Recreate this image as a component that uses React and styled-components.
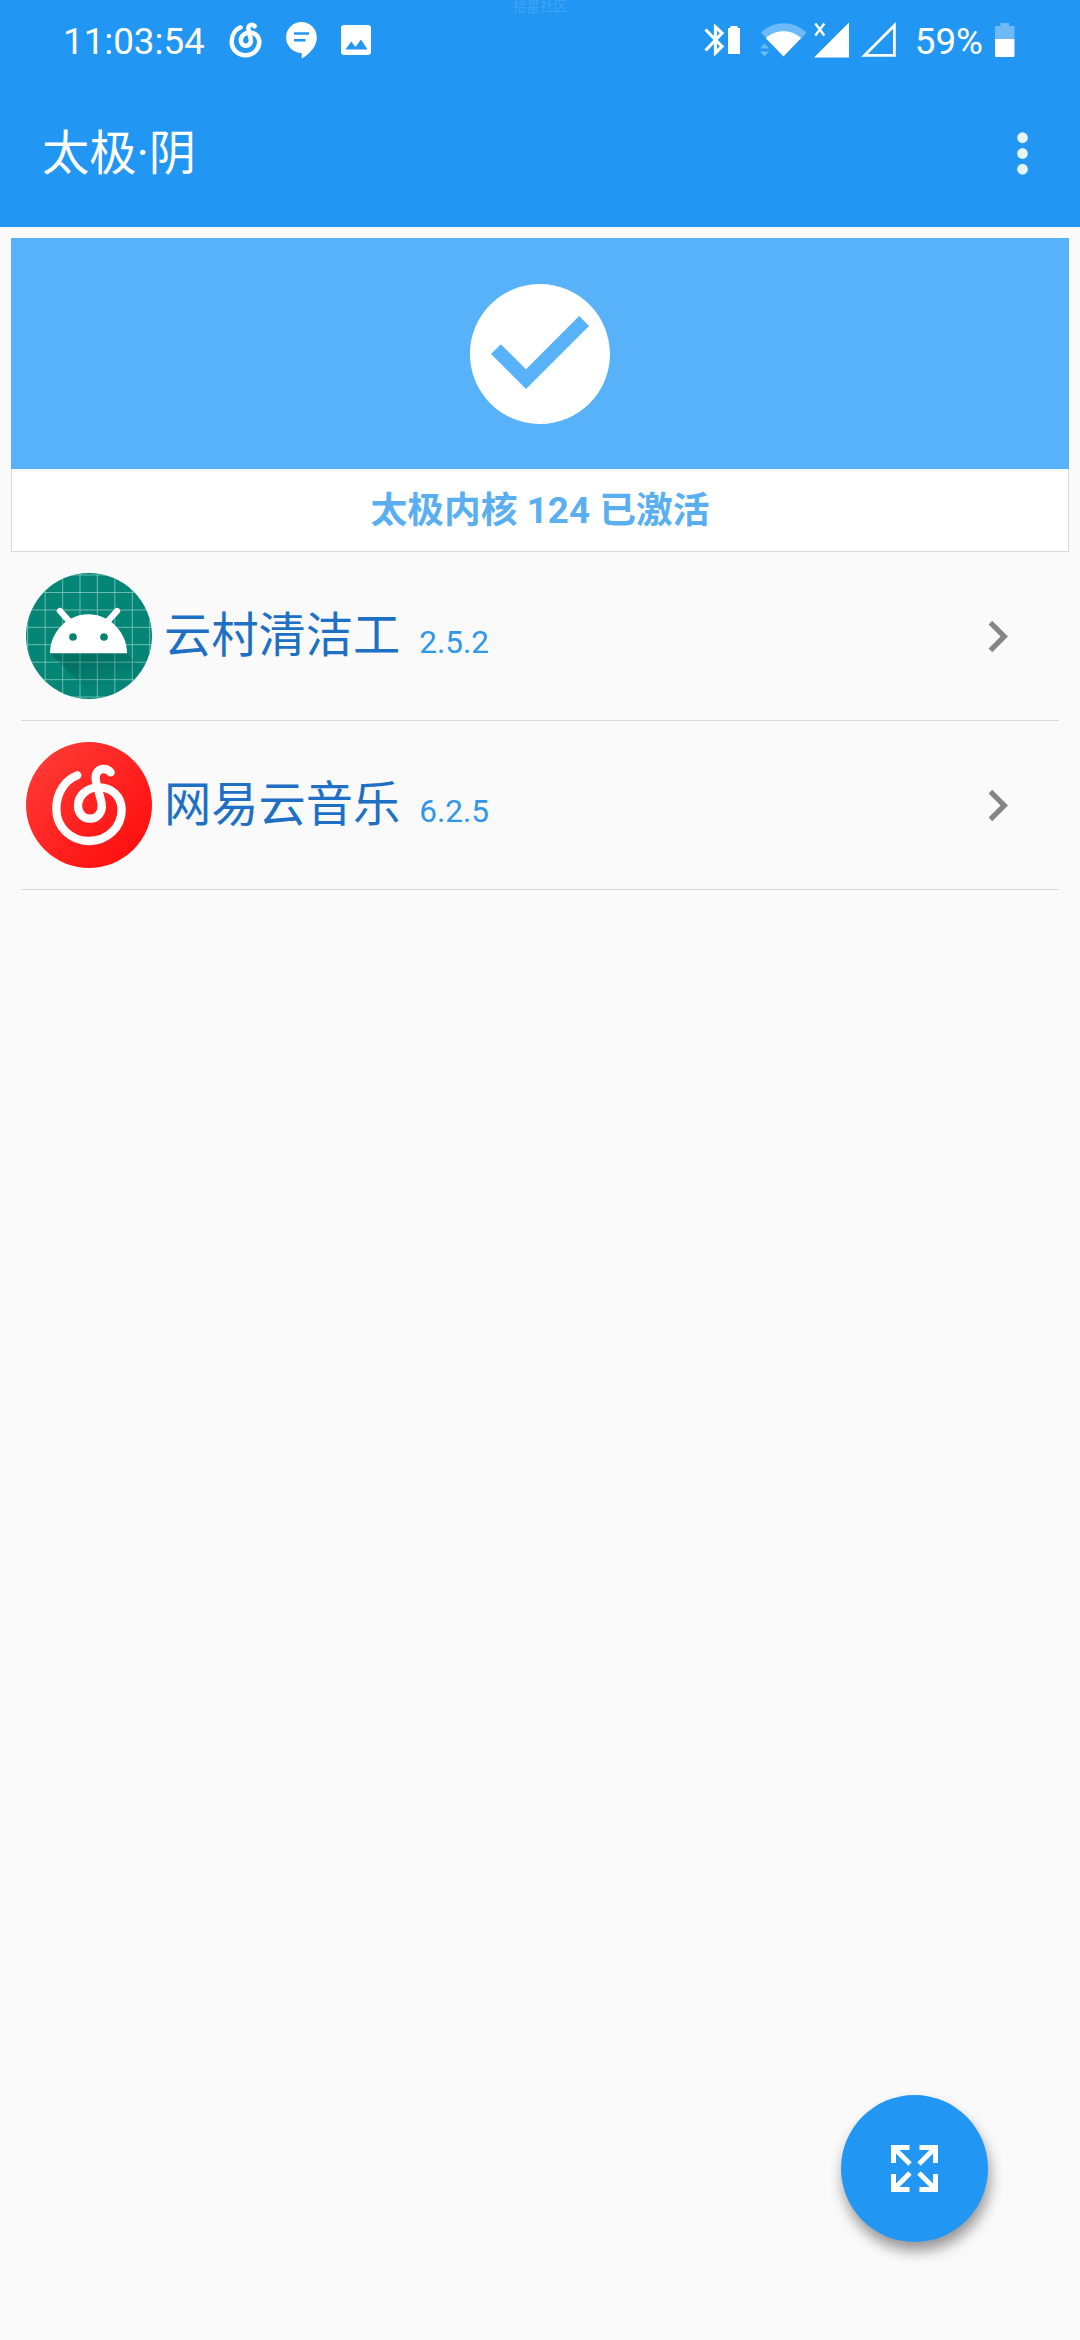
import * as React from "react";
import styled, { createGlobalStyle } from "styled-components";

const appsList = [
  { id: "cleaner", name: "云村清洁工", version: "2.5.2", Icon: IconAndroid },
  { id: "music", name: "网易云音乐", version: "6.2.5", Icon: IconMusic },
];

function App() {
  return (
    <Screen>
      <GlobalStyle />
      <AppBar>
        <Watermark>拾星社区</Watermark>
        <StatusBar>
          <StatusGroup>
            <StatusText>11:03:54</StatusText>
            <MusicStatus viewBox="157 165 220 240">
              <MusicGlyph strokeWidth="32" />
            </MusicStatus>
            <ChatStatus />
            <PictureStatus />
          </StatusGroup>
          <StatusGroup>
            <BluetoothStatus />
            <WifiStatus />
            <SignalStatus />
            <SignalEmptyStatus />
            <StatusText>59%</StatusText>
            <BatteryStatus />
          </StatusGroup>
        </StatusBar>
        <Toolbar>
          <ToolbarTitle>太极·阴</ToolbarTitle>
          <IconButton aria-label="more">
            <svg width="63" height="63" viewBox="0 0 24 24" fill="#e3f5fe">
              <circle cx="12" cy="6" r="2.05" />
              <circle cx="12" cy="12" r="2.05" />
              <circle cx="12" cy="18" r="2.05" />
            </svg>
          </IconButton>
        </Toolbar>
      </AppBar>

      <StatusCard>
        <StatusCardHero>
          <svg width="168" height="168" viewBox="0 0 24 24" fill="#fff">
            <path d="M12 2C6.48 2 2 6.48 2 12s4.48 10 10 10 10-4.48 10-10S17.52 2 12 2zm-2 15l-5-5 1.41-1.41L10 14.17l7.59-7.59L19 8l-9 9z" />
          </svg>
        </StatusCardHero>
        <StatusCardLabel>太极内核 124 已激活</StatusCardLabel>
      </StatusCard>

      <AppList>
        {appsList.map(({ id, name, version, Icon }) => (
          <AppItem key={id}>
            <Icon />
            <AppName>{name}</AppName>
            <AppVersion>{version}</AppVersion>
            <Chevron viewBox="0 0 24 24">
              <path d="M10 6L8.59 7.41 13.17 12l-4.58 4.59L10 18l6-6z" />
            </Chevron>
          </AppItem>
        ))}
      </AppList>

      <FloatingButton aria-label="expand">
        <svg width="47" height="47" viewBox="0 0 47 47" fill="none" stroke="#fff" strokeWidth="5">
          <path d="M18.500 2.500H2.500V18M3 3l16 16" />
          <path d="M28.500 2.500h16V18M44 3L28 19" />
          <path d="M18.500 44.500H2.500V29M3 44l16-16" />
          <path d="M28.500 44.500h16V29M44 44L28 28" />
        </svg>
      </FloatingButton>
    </Screen>
  );
}

function MusicGlyph({ strokeWidth }) {
  return (
    <path
      fill="none"
      stroke="#fff"
      strokeWidth={strokeWidth}
      strokeLinecap="round"
      strokeLinejoin="round"
      d="M232 196C194 210 169 250 169 297C169 352 213 393 267 393C321 393 365 352 365 300C365 258 335 232 296 232C260 232 234 258 234 287C234 310 250 326 270 326C292 326 308 308 305 283C303 262 288 225 287 206C286 186 298 177 311 177C321 177 327 181 332 187"
    />
  );
}

function IconMusic() {
  return (
    <AppIcon viewBox="78 96 378 378">
      <defs>
        <linearGradient id="music-bg" x1="0" y1="0" x2="1" y2="1">
          <stop offset="0.1" stopColor="#ff3a35" />
          <stop offset="0.9" stopColor="#ff0e0e" />
        </linearGradient>
      </defs>
      <circle cx="267" cy="285" r="189" fill="url(#music-bg)" />
      <MusicGlyph strokeWidth="25" />
    </AppIcon>
  );
}

function IconAndroid() {
  const lines = [5, 57.5, 110, 162, 214, 266.5, 319, 371];
  return (
    <AppIcon viewBox="0 0 378 378">
      <defs>
        <clipPath id="android-clip">
          <circle cx="189" cy="189" r="189" />
        </clipPath>
        <linearGradient id="android-shade" x1="0" y1="0" x2="0.7" y2="1">
          <stop offset="0.3" stopColor="#00453c" stopOpacity="0.3" />
          <stop offset="0.75" stopColor="#00453c" stopOpacity="0" />
        </linearGradient>
      </defs>
      <g clipPath="url(#android-clip)">
        <path fill="#048576" d="M0 0h378v378H0z" />
        <g stroke="#7cc4bb" strokeWidth="2.600">
          {lines.map((pos) => (
            <React.Fragment key={pos}>
              <path d={`M${pos} 0V378`} />
              <path d={`M0 ${pos + 1}H378`} />
            </React.Fragment>
          ))}
        </g>
        <path fill="url(#android-shade)" d="M72 240H302L378 316V378H210z" />
      </g>
      <path stroke="#fff" strokeWidth="19" strokeLinecap="round" d="M102 114l27 30M273 114l-27 30" />
      <path fill="#fff" d="M72 241C72 178 123 124 187 124S303 178 303 241z" />
      <circle cx="141" cy="192" r="11.500" fill="#048576" />
      <circle cx="234" cy="192" r="11.500" fill="#048576" />
    </AppIcon>
  );
}

function ChatStatus() {
  return (
    <StatusIcon $gap={25} width="31" height="37" viewBox="0 0 31 37">
      <path fill="#fff" d="M15.500 0a15.500 15.500 0 0 1 15.300 15.500C30.800 24 24 32 15.700 36.500V31A15.500 15.500 0 0 1 15.500 0z" />
      <path stroke="#2196f3" strokeWidth="2.400" d="M8 11.500h15M8 18.300h11.500" />
    </StatusIcon>
  );
}

function PictureStatus() {
  return (
    <StatusIcon $gap={24} width="30" height="30" viewBox="0 0 30 30">
      <rect width="30" height="30" rx="3" fill="#fff" />
      <path fill="#2196f3" d="M4.500 24.500l5.700-8 4.300 5.500 5.500-7.500 6.500 10z" />
    </StatusIcon>
  );
}

function BluetoothStatus() {
  return (
    <StatusIcon width="36" height="34" viewBox="0 0 36 34">
      <path fill="none" stroke="#fff" strokeWidth="3.200" d="M1.500 6.500L18 23.500l-6.500 6.500V4l6.500 6L1.500 27.500" />
      <path fill="#fff" d="M24 5h2.500V3h7v2H36v26H24z" />
    </StatusIcon>
  );
}

function WifiStatus() {
  return (
    <StatusIcon $gap={20} width="47" height="34" viewBox="0 0 47 34">
      <path fill="#fff" fillOpacity="0.35" d="M1 9.500C14-3 33-3 46.500 9.500L40 17H8z" />
      <path fill="#fff" d="M5.800 15.300C15 6 32 6 41 15.300L23.500 33.500z" />
      <path fill="#fff" fillOpacity="0.35" d="M0 25.500l4.500-5 4.500 5zM0 28.500h9l-4.500 5z" />
    </StatusIcon>
  );
}

function SignalStatus() {
  return (
    <StatusIcon $gap={7} width="35" height="36" viewBox="0 0 35 36">
      <path fill="#fff" d="M35 0.500V35.500H0z" />
      <path stroke="#fff" strokeWidth="2.400" d="M1.300 1.500l9 12M10.300 1.500l-9 12" />
    </StatusIcon>
  );
}

function SignalEmptyStatus() {
  return (
    <StatusIcon $gap={12} width="35" height="36" viewBox="0 0 35 36">
      <path fill="none" stroke="#fff" strokeWidth="2.800" d="M33.400 3.500V33.300H3.600z" />
    </StatusIcon>
  );
}

function BatteryStatus() {
  return (
    <StatusIcon $gap={12} width="20" height="34" viewBox="0 0 20 34">
      <path fill="#fff" fillOpacity="0.35" d="M0 3h5.500V0h8.500v3h5.500v13H0z" />
      <path fill="#fff" d="M0 16h19.500v17a1 1 0 0 1-1 1H1a1 1 0 0 1-1-1z" />
    </StatusIcon>
  );
}

const GlobalStyle = createGlobalStyle`
  * {
    box-sizing: border-box;
  }

  body {
    margin: 0;
    background-color: #fafafa;
    font-family: Roboto, "Noto Sans CJK SC", sans-serif;
  }

  svg {
    display: block;
  }

  button {
    padding: 0;
    border: none;
    background: none;
  }
`;

const Screen = styled.div`
  width: 1080px;
  height: 2340px;
  background-color: #fafafa;
`;

const AppBar = styled.header`
  height: 227px;
  background-color: #2196f3;
`;

const Watermark = styled.div`
  position: absolute;
  top: 0;
  left: 513px;
  font-size: 13.5px;
  line-height: 13px;
  color: #40a3f4;
`;

const StatusBar = styled.div`
  display: flex;
  justify-content: space-between;
  height: 80px;
  padding: 0 65px 0 63px;
`;

const StatusGroup = styled.div`
  display: flex;
  align-items: center;
`;

const StatusText = styled.span`
  padding-top: 3px;
  font-size: 36.75px;
  line-height: 44px;
  color: #ffffff;

  * + & {
    margin-left: 19px;
  }
`;

const StatusIcon = styled.svg`
  flex: none;
  margin-left: ${({ $gap = 0 }) => $gap}px;
`;

const MusicStatus = styled.svg`
  width: 31px;
  height: 34px;
  margin-left: 25px;
  overflow: visible;
`;

const Toolbar = styled.div`
  display: flex;
  justify-content: space-between;
  align-items: center;
  height: 147px;
  padding: 0 26px 0 42px;
`;

const ToolbarTitle = styled.h1`
  margin: 0;
  font-size: 47.25px;
  font-weight: 400;
  line-height: 60px;
  color: #ffffff;
`;

const IconButton = styled.button`
  width: 63px;
  height: 63px;
`;

const StatusCard = styled.section`
  margin: 11px 11px 0;
`;

const StatusCardHero = styled.div`
  display: flex;
  justify-content: center;
  align-items: center;
  height: 231px;
  background-color: #58b2fa;
`;

const StatusCardLabel = styled.div`
  height: 83px;
  border: solid 1px #d8d8d8;
  border-top: none;
  background-color: #ffffff;
  font-size: 36.75px;
  font-weight: 700;
  line-height: 84px;
  text-align: center;
  color: #5aaff1;
`;

const AppList = styled.div`
  padding: 0 21px;
`;

const AppItem = styled.div`
  display: flex;
  align-items: center;
  height: 169px;
  padding: 0 30px 0 5px;
  border-bottom: solid 1px #d9d9d9;
`;

const AppIcon = styled.svg`
  flex: none;
  width: 126px;
  height: 126px;
`;

const AppName = styled.span`
  margin-left: 12px;
  font-size: 47.25px;
  line-height: 60px;
  color: #1e70c4;
`;

const AppVersion = styled.span`
  margin-left: 19px;
  padding-top: 13px;
  font-size: 31.5px;
  line-height: 40px;
  color: #2f97e8;
`;

const Chevron = styled.svg`
  width: 63px;
  height: 63px;
  margin-left: auto;
  fill: #858585;
`;

const FloatingButton = styled.button`
  position: fixed;
  top: 2095px;
  left: 841px;
  display: flex;
  justify-content: center;
  align-items: center;
  width: 147px;
  height: 147px;
  border-radius: 50%;
  background-color: #2196f3 !important;
  box-shadow: 2px 9px 14px rgba(0, 0, 0, 0.4);
`;

export default App;
